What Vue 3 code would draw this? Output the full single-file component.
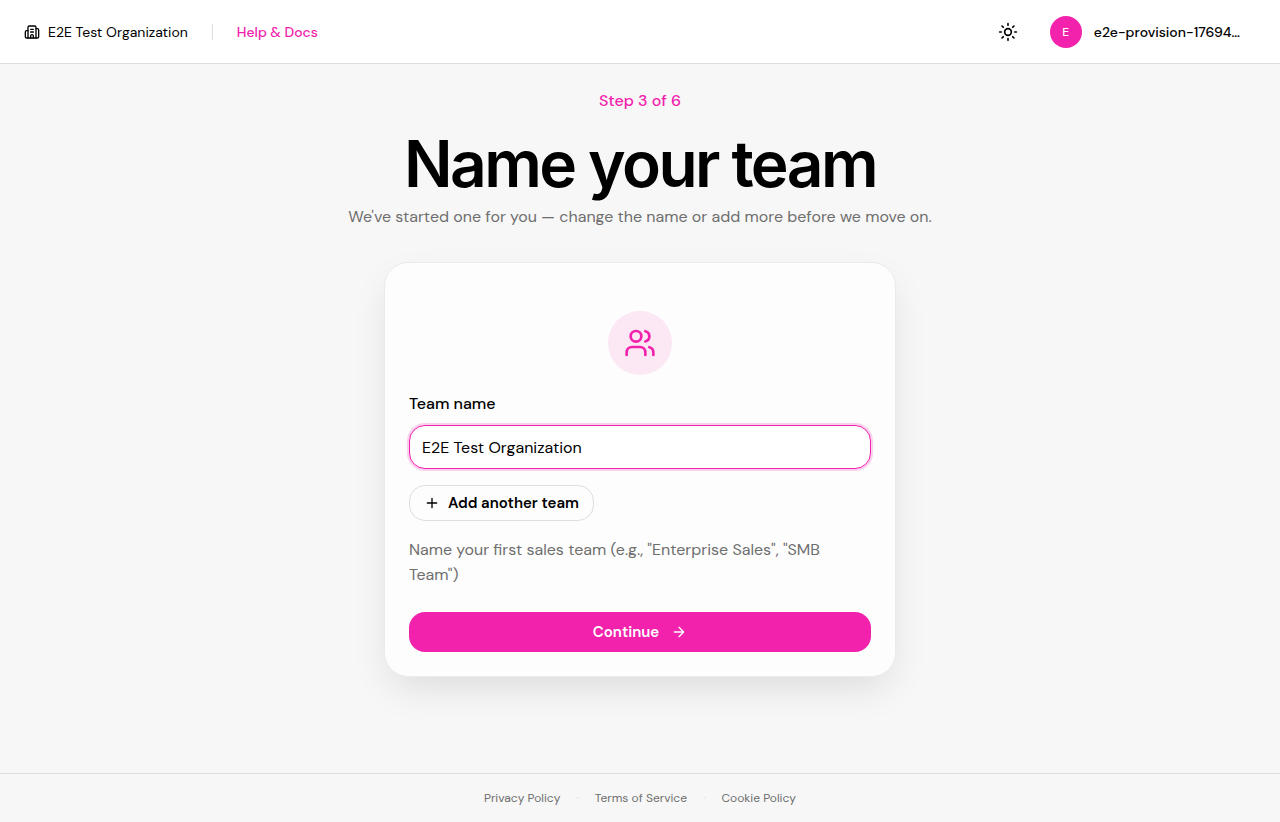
<script setup>
import { ref, onMounted } from 'vue'

const organization = 'E2E Test Organization'
const user = { initial: 'E', name: 'e2e-provision-17694…' }

const teamName = ref(organization)
const teamInput = ref(null)

const footerLinks = ['Privacy Policy', 'Terms of Service', 'Cookie Policy']

// The name is ready to edit as soon as the step opens
onMounted(() => {
  teamInput.value?.focus()
})
</script>

<template>
  <div class="page">
    <header class="topbar">
      <div class="topbar-group">
        <div class="org">
          <svg class="icon-sm" viewBox="0 0 24 24" aria-hidden="true">
            <path d="M10 12h4M10 8h4M14 21v-3a2 2 0 0 0-4 0v3" />
            <path d="M6 10H4a2 2 0 0 0-2 2v7a2 2 0 0 0 2 2h16a2 2 0 0 0 2-2V9a2 2 0 0 0-2-2h-2" />
            <path d="M6 21V5a2 2 0 0 1 2-2h8a2 2 0 0 1 2 2v16" />
          </svg>
          <span>{{ organization }}</span>
        </div>
        <span class="divider"></span>
        <a class="help-link" href="#">Help &amp; Docs</a>
      </div>

      <div class="topbar-group">
        <button class="theme-toggle" type="button" aria-label="Toggle theme">
          <svg class="icon-md" viewBox="0 0 24 24" aria-hidden="true">
            <circle cx="12" cy="12" r="4" />
            <path d="M12 2v2M12 20v2M4.93 4.93l1.41 1.41M17.66 17.66l1.41 1.41M2 12h2M20 12h2M6.34 17.66l-1.41 1.41M19.07 4.93l-1.41 1.41" />
          </svg>
        </button>
        <button class="account" type="button">
          <span class="avatar">{{ user.initial }}</span>
          <span>{{ user.name }}</span>
        </button>
      </div>
    </header>

    <main class="content">
      <p class="step">Step 3 of 6</p>
      <h1 class="title">Name your team</h1>
      <p class="subtitle">We've started one for you — change the name or add more before we move on.</p>

      <form class="card" @submit.prevent>
        <div class="card-icon">
          <svg class="icon-lg" viewBox="0 0 24 24" aria-hidden="true">
            <path d="M16 21v-2a4 4 0 0 0-4-4H6a4 4 0 0 0-4 4v2" />
            <circle cx="9" cy="7" r="4" />
            <path d="M22 21v-2a4 4 0 0 0-3-3.87M16 3.13a4 4 0 0 1 0 7.75" />
          </svg>
        </div>

        <label class="label" for="team-name">Team name</label>
        <input id="team-name" ref="teamInput" v-model="teamName" class="input" type="text" />

        <button class="add-button" type="button">
          <svg class="icon-sm" viewBox="0 0 24 24" aria-hidden="true">
            <path d="M5 12h14M12 5v14" />
          </svg>
          <span>Add another team</span>
        </button>

        <p class="hint">Name your first sales team (e.g., "Enterprise Sales", "SMB Team")</p>

        <button class="continue-button" type="submit">
          <span>Continue</span>
          <svg class="icon-sm" viewBox="0 0 24 24" aria-hidden="true">
            <path d="M5 12h14M12 5l7 7-7 7" />
          </svg>
        </button>
      </form>
    </main>

    <footer class="footer">
      <template v-for="(link, i) in footerLinks" :key="link">
        <span v-if="i > 0" class="dot">·</span>
        <a href="#">{{ link }}</a>
      </template>
    </footer>
  </div>
</template>

<style>
body {
  margin: 0;
  background: #f7f7f7;
}
</style>

<style scoped>
.page {
  --pink: #f222ad;
  --border: #dedede;
  --muted: #6e6e6e;
  display: flex;
  flex-direction: column;
  min-height: 100vh;
  font-family: 'DM Sans', Inter, sans-serif;
  font-size: 16px;
  line-height: 26px;
  color: #000000;
}

.page *,
.page {
  box-sizing: border-box;
}

button,
input {
  font: inherit;
  color: inherit;
}

button {
  cursor: pointer;
}

a {
  color: inherit;
  text-decoration: none;
}

svg {
  flex-shrink: 0;
  fill: none;
  stroke: currentColor;
  stroke-width: 2;
  stroke-linecap: round;
  stroke-linejoin: round;
}

.icon-sm {
  width: 16px;
  height: 16px;
}

.icon-md {
  width: 20px;
  height: 20px;
}

.icon-lg {
  width: 32px;
  height: 32px;
}

/* Top bar */
.topbar {
  display: flex;
  align-items: center;
  justify-content: space-between;
  height: 64px;
  padding: 0 24px;
  background: #ffffff;
  border-bottom: 1px solid var(--border);
  font-size: 14px;
  line-height: 20px;
}

.topbar-group {
  display: flex;
  align-items: center;
  gap: 24px;
}

.org {
  display: flex;
  align-items: center;
  gap: 8px;
}

.divider {
  width: 1px;
  height: 16px;
  background: var(--border);
}

.help-link {
  color: var(--pink);
  font-weight: 500;
}

.theme-toggle {
  display: flex;
  align-items: center;
  justify-content: center;
  width: 36px;
  height: 36px;
  padding: 0;
  background: transparent;
  border: 0;
}

.account {
  display: flex;
  align-items: center;
  gap: 12px;
  padding: 0 16px 0 0;
  background: transparent;
  border: 0;
  font-weight: 500;
}

.avatar {
  display: flex;
  align-items: center;
  justify-content: center;
  width: 32px;
  height: 32px;
  border-radius: 50%;
  background: var(--pink);
  color: #ffffff;
  font-size: 12px;
}

/* Step content */
.content {
  flex: 1;
  display: flex;
  flex-direction: column;
  align-items: center;
  padding: 24px 24px 48px;
}

.step {
  margin: 0;
  font-weight: 500;
  color: var(--pink);
}

.title {
  margin: 18px 0 0;
  font-family: Inter, sans-serif;
  font-size: 64px;
  font-weight: 600;
  line-height: 64px;
  letter-spacing: -0.04em;
}

.subtitle {
  margin: 8px 0 0;
  color: var(--muted);
}

.card {
  width: 100%;
  max-width: 512px;
  margin-top: 32px;
  padding: 48px 24px 24px;
  display: flex;
  flex-direction: column;
  background: #fdfdfd;
  border: 1px solid #ebebeb;
  border-radius: 24px;
  box-shadow: 0 16px 40px -8px rgba(0, 0, 0, 0.12);
}

.card-icon {
  display: flex;
  align-items: center;
  justify-content: center;
  align-self: center;
  width: 64px;
  height: 64px;
  border-radius: 50%;
  background: #fce7f4;
  color: var(--pink);
}

.label {
  margin-top: 16px;
  font-weight: 500;
}

.input {
  width: 100%;
  height: 44px;
  margin-top: 8px;
  padding: 0 12px;
  background: #ffffff;
  border: 1px solid var(--border);
  border-radius: 16px;
  outline: none;
}

.input:focus {
  border-color: var(--pink);
  box-shadow: 0 0 0 2px rgba(242, 34, 173, 0.2);
}

.add-button {
  display: flex;
  align-items: center;
  align-self: flex-start;
  gap: 8px;
  height: 36px;
  margin-top: 16px;
  padding: 0 14px;
  background: transparent;
  border: 1px solid var(--border);
  border-radius: 16px;
  font-size: 15px;
  font-weight: 600;
  line-height: 20px;
}

.hint {
  margin: 16px 0 0;
  line-height: 25px;
  color: var(--muted);
}

.continue-button {
  display: flex;
  align-items: center;
  justify-content: center;
  gap: 12px;
  height: 40px;
  margin-top: 25px;
  background: var(--pink);
  border: 0;
  border-radius: 16px;
  color: #ffffff;
  font-size: 15px;
  font-weight: 600;
  line-height: 20px;
}

/* Footer */
.footer {
  display: flex;
  align-items: center;
  justify-content: center;
  gap: 16px;
  padding: 16px 24px;
  border-top: 1px solid var(--border);
  font-size: 12px;
  line-height: 16px;
  color: var(--muted);
}

.dot {
  color: var(--border);
}
</style>
